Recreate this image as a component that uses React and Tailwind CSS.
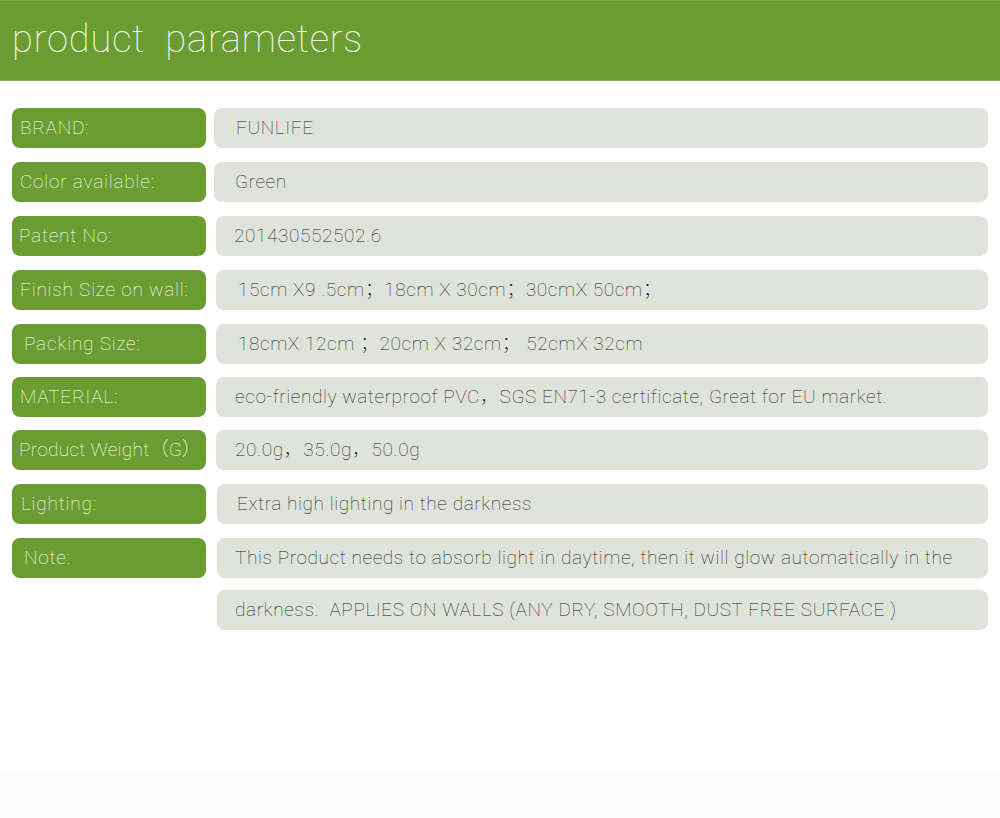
const rows = [
  { label: "BRAND:", value: "FUNLIFE", mt: "mt-[27px]", lp: "pl-[8px]", vp: "pl-[22px]", vm: "ml-[8px]", vw: "w-[774px]", lt: "tracking-[0.8px]" },
  { label: "Color available:", value: "Green", mt: "mt-[14px]", lp: "pl-[8px]", vp: "pl-[21px]", vm: "ml-[8px]", vw: "w-[774px]", lt: "tracking-[0.8px]" },
  { label: "Patent No:", value: "201430552502.6", mt: "mt-[14px]", lp: "pl-[7px]", vp: "pl-[18px]", vm: "ml-[10px]", vw: "w-[772px]", lt: "tracking-[0.8px]" },
  { label: "Finish Size on wall:", value: "15cm X9 .5cm；18cm X 30cm；30cmX 50cm；", mt: "mt-[14px]", lp: "pl-[8px]", vp: "pl-[22px]", vm: "ml-[10px]", vw: "w-[772px]", lt: "tracking-[0.8px]" },
  { label: "Packing Size:", value: "18cmX 12cm ；20cm X 32cm； 52cmX 32cm", mt: "mt-[14px]", lp: "pl-[12px]", vp: "pl-[22px]", vm: "ml-[10px]", vw: "w-[772px]", lt: "tracking-[0.8px]" },
  { label: "MATERIAL:", value: "eco-friendly waterproof PVC，SGS EN71-3 certificate, Great for EU market.", mt: "mt-[13px]", lp: "pl-[8px]", vp: "pl-[19px]", vm: "ml-[10px]", vw: "w-[772px]", lt: "tracking-[0.8px]" },
  { label: "Product Weight（G）", value: "20.0g，35.0g，50.0g", mt: "mt-[13px]", lp: "pl-[7px]", vp: "pl-[19px]", vm: "ml-[10px]", vw: "w-[772px]", lt: "tracking-[0.3px]" },
  { label: "Lighting:", value: "Extra high lighting in the darkness", mt: "mt-[14px]", lp: "pl-[9px]", vp: "pl-[20px]", vm: "ml-[11px]", vw: "w-[771px]", lt: "tracking-[0.8px]" },
  { label: "Note:", value: "This Product needs to absorb light in daytime, then it will glow automatically in the", mt: "mt-[14px]", lp: "pl-[12px]", vp: "pl-[18px]", vm: "ml-[11px]", vw: "w-[771px]", lt: "tracking-[0.8px]" },
];

export default function App() {
  return (
    <div className="w-[1000px] h-[818px] bg-white flex flex-col font-['Roboto','Noto_Sans_CJK_SC',sans-serif] font-thin">
      <div className="h-[81px] bg-[#6b9c31] border-t border-[#7faa4a] border-b border-b-[#86b04f] flex items-start pl-[12px] pt-[14px]">
        <span className="text-white text-[38px] leading-[48px] tracking-[0.9px] whitespace-pre">
          {"product  parameters"}
        </span>
      </div>
      <div className="flex flex-col">
        {rows.map((r, i) => (
          <div key={i} className={`flex ${r.mt}`}>
            <div className={`ml-[12px] w-[194px] h-[40px] rounded-[8px] bg-[#6b9c31] flex items-center ${r.lp} text-white text-[19px] ${r.lt} whitespace-nowrap`}>
              {r.label}
            </div>
            <div className={`${r.vm} ${r.vw} h-[40px] rounded-[8px] bg-[#dfe3da] flex items-center ${r.vp} text-[#222] text-[19px] tracking-[0.6px] whitespace-nowrap`}>
              {r.value}
            </div>
          </div>
        ))}
        <div className="flex mt-[12px]">
          <div className="ml-[217px] w-[771px] h-[40px] rounded-[8px] bg-[#dfe3da] flex items-center pl-[18px] text-[#222] text-[19px] tracking-[0.6px] whitespace-nowrap">
            darkness.&nbsp; APPLIES ON WALLS (ANY DRY, SMOOTH, DUST FREE SURFACE )
          </div>
        </div>
      </div>
      <div className="flex-1" />
      <div className="h-[46px] bg-[#fcfcfc]" />
    </div>
  );
}
